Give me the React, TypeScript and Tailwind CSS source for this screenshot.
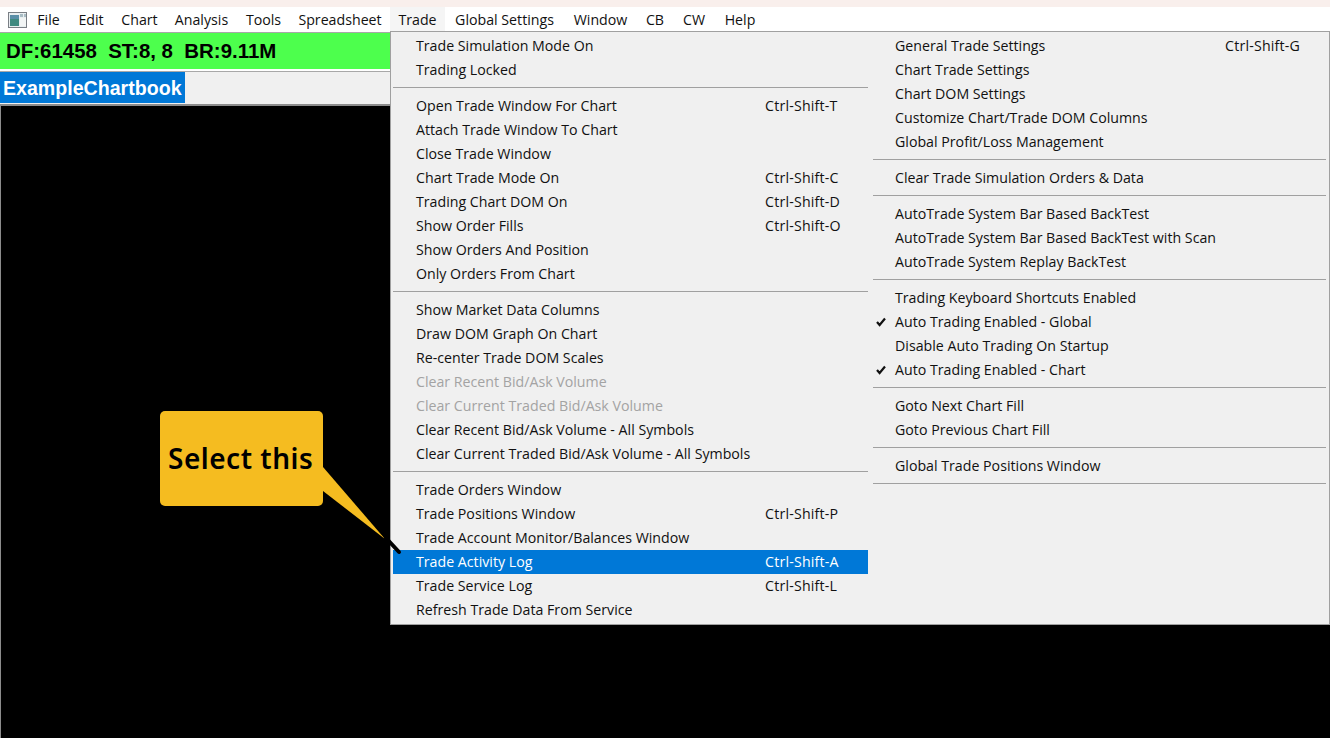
const MENU_BAR = [
  { name: "File", w: "w-[41px]" },
  { name: "Edit", w: "w-[44px]" },
  { name: "Chart", w: "w-[53px]" },
  { name: "Analysis", w: "w-[71px]" },
  { name: "Tools", w: "w-[53px]" },
  { name: "Spreadsheet", w: "w-[100px]" },
  { name: "Trade", w: "w-[55px]" },
  { name: "Global Settings", w: "w-[119px]" },
  { name: "Window", w: "w-[73px]" },
  { name: "CB", w: "w-[36px]" },
  { name: "CW", w: "w-[42px]" },
  { name: "Help", w: "w-[50px]" },
];

type Item = { label: string; shortcut?: string; disabled?: boolean; checked?: boolean; active?: boolean };

const LEFT_GROUPS: Item[][] = [
  [{ label: "Trade Simulation Mode On" }, { label: "Trading Locked" }],
  [
    { label: "Open Trade Window For Chart", shortcut: "Ctrl-Shift-T" },
    { label: "Attach Trade Window To Chart" },
    { label: "Close Trade Window" },
    { label: "Chart Trade Mode On", shortcut: "Ctrl-Shift-C" },
    { label: "Trading Chart DOM On", shortcut: "Ctrl-Shift-D" },
    { label: "Show Order Fills", shortcut: "Ctrl-Shift-O" },
    { label: "Show Orders And Position" },
    { label: "Only Orders From Chart" },
  ],
  [
    { label: "Show Market Data Columns" },
    { label: "Draw DOM Graph On Chart" },
    { label: "Re-center Trade DOM Scales" },
    { label: "Clear Recent Bid/Ask Volume", disabled: true },
    { label: "Clear Current Traded Bid/Ask Volume", disabled: true },
    { label: "Clear Recent Bid/Ask Volume - All Symbols" },
    { label: "Clear Current Traded Bid/Ask Volume - All Symbols" },
  ],
  [
    { label: "Trade Orders Window" },
    { label: "Trade Positions Window", shortcut: "Ctrl-Shift-P" },
    { label: "Trade Account Monitor/Balances Window" },
    { label: "Trade Activity Log", shortcut: "Ctrl-Shift-A", active: true },
    { label: "Trade Service Log", shortcut: "Ctrl-Shift-L" },
    { label: "Refresh Trade Data From Service" },
  ],
];

const RIGHT_GROUPS: Item[][] = [
  [
    { label: "General Trade Settings", shortcut: "Ctrl-Shift-G" },
    { label: "Chart Trade Settings" },
    { label: "Chart DOM Settings" },
    { label: "Customize Chart/Trade DOM Columns" },
    { label: "Global Profit/Loss Management" },
  ],
  [{ label: "Clear Trade Simulation Orders & Data" }],
  [
    { label: "AutoTrade System Bar Based BackTest" },
    { label: "AutoTrade System Bar Based BackTest with Scan" },
    { label: "AutoTrade System Replay BackTest" },
  ],
  [
    { label: "Trading Keyboard Shortcuts Enabled" },
    { label: "Auto Trading Enabled - Global", checked: true },
    { label: "Disable Auto Trading On Startup" },
    { label: "Auto Trading Enabled - Chart", checked: true },
  ],
  [{ label: "Goto Next Chart Fill" }, { label: "Goto Previous Chart Fill" }],
  [{ label: "Global Trade Positions Window" }],
];

const MenuRow = ({ item, shortcutCol }: { item: Item; shortcutCol: string }) => {
  const tone = item.active ? "bg-[#0078d7] text-white" : item.disabled ? "text-[#a3a3a3]" : "text-[#111]";
  return (
    <div className={`relative flex h-6 items-center pl-[23px] whitespace-nowrap ${tone}`}>
      {item.checked && (
        <svg className="absolute left-[3px] top-[7px]" width="10" height="10" viewBox="0 0 10 10">
          <path d="M1 5 L3.6 8 L9 1.5" fill="none" stroke="#111" strokeWidth="2.2" />
        </svg>
      )}
      <span className={shortcutCol}>{item.label}</span>
      {item.shortcut && <span className="tracking-[0.2px]">{item.shortcut}</span>}
    </div>
  );
};

const Separator = () => <div className="mt-[5px] mb-[6px] h-px bg-[#a0a0a0]" />;

const MenuColumn = ({
  groups,
  className,
  shortcutCol,
  trailingLine,
}: {
  groups: Item[][];
  className: string;
  shortcutCol: string;
  trailingLine?: boolean;
}) => (
  <div className={className}>
    {groups.map((group, i) => (
      <div key={i}>
        {i > 0 && <Separator />}
        {group.map((item) => (
          <MenuRow key={item.label} item={item} shortcutCol={shortcutCol} />
        ))}
      </div>
    ))}
    {trailingLine && <Separator />}
  </div>
);

const AppIcon = () => (
  <svg width="20" height="16" viewBox="0 0 20 16" className="shrink-0">
    <rect x="0.5" y="0.5" width="18" height="15" fill="#e8eef0" stroke="#7a7f85" />
    <rect x="2" y="3" width="9" height="11" fill="#3f8a80" />
    <rect x="2" y="3" width="9" height="4" fill="#5a8fa8" />
    <rect x="12" y="2" width="3" height="3" fill="#a9bcc4" />
    <rect x="16" y="2" width="2" height="3" fill="#a9bcc4" />
    <rect x="12" y="6" width="6" height="8" fill="#f2f5f5" />
  </svg>
);

const App = () => {
  return (
    <div className="relative flex h-[738px] w-[1330px] flex-col overflow-hidden bg-black font-['Open_Sans','Noto_Sans',sans-serif] text-[14.2px] leading-6">
      <div className="h-[7px] bg-[#f9efec]" />

      {/* Menu bar */}
      <div className="flex h-[25px] items-center bg-white pl-[8px] text-[#111]">
        <AppIcon />
        <div className="flex h-full items-center">
          {MENU_BAR.map(({ name, w }) => (
            <span key={name} className={`flex h-full items-center justify-center ${w} ${name === "Trade" ? "bg-[#f5f5f5]" : ""}`}>
              {name}
            </span>
          ))}
        </div>
      </div>

      {/* Status */}
      <div className="h-[40px] border-t border-b border-t-[#a8a8a8] border-b-[#a8a8a8] bg-white">
        <div className="h-[36px] bg-[#4dff4d] pl-[6px] font-['Liberation_Sans',sans-serif] text-[20.45px] leading-[36px] font-bold whitespace-pre text-black">
          DF:61458  ST:8, 8  BR:9.11M
        </div>
      </div>

      {/* Chartbook tab */}
      <div className="h-[34px] border-b-2 border-b-[#8c8c8c] bg-[#f0f0f0]">
        <div className="h-[31px] w-[185px] bg-[#0078d7] pl-[3px] font-['Liberation_Sans',sans-serif] text-[19.6px] leading-[32px] font-bold text-white">
          ExampleChartbook
        </div>
      </div>

      <div className="flex-1 border-l border-l-[#8c8c8c] bg-black" />

      {/* Trade menu */}
      <div className="absolute top-[31px] left-[390px] flex h-[594px] w-[940px] border border-[#a0a0a0] bg-[#f0f0f0] pt-[2px]">
        <MenuColumn groups={LEFT_GROUPS} className="ml-[2px] w-[475px]" shortcutCol="w-[349px] shrink-0" />
        <MenuColumn groups={RIGHT_GROUPS} className="ml-[5px] w-[453px] [&>div>div]:pl-[22px]" shortcutCol="w-[330px] shrink-0" trailingLine />
      </div>

      {/* Callout */}
      <div className="absolute top-[411px] left-[160px] h-[95px] w-[163px] rounded-[5px] bg-[#f5bc20] pt-[26px] pl-[8px] font-['Noto_Sans',sans-serif] text-[28px] leading-[42px] font-semibold tracking-[0.5px] text-black">
        Select this
      </div>
      <svg className="absolute top-[460px] left-[320px]" width="90" height="100" viewBox="0 0 90 100">
        <path d="M3 7 L65 79 L3 31 Z" fill="#f5bc20" />
        <path d="M66 78 L79 92" stroke="#000" strokeWidth="4" strokeLinecap="round" />
      </svg>
    </div>
  );
};

export default App;
